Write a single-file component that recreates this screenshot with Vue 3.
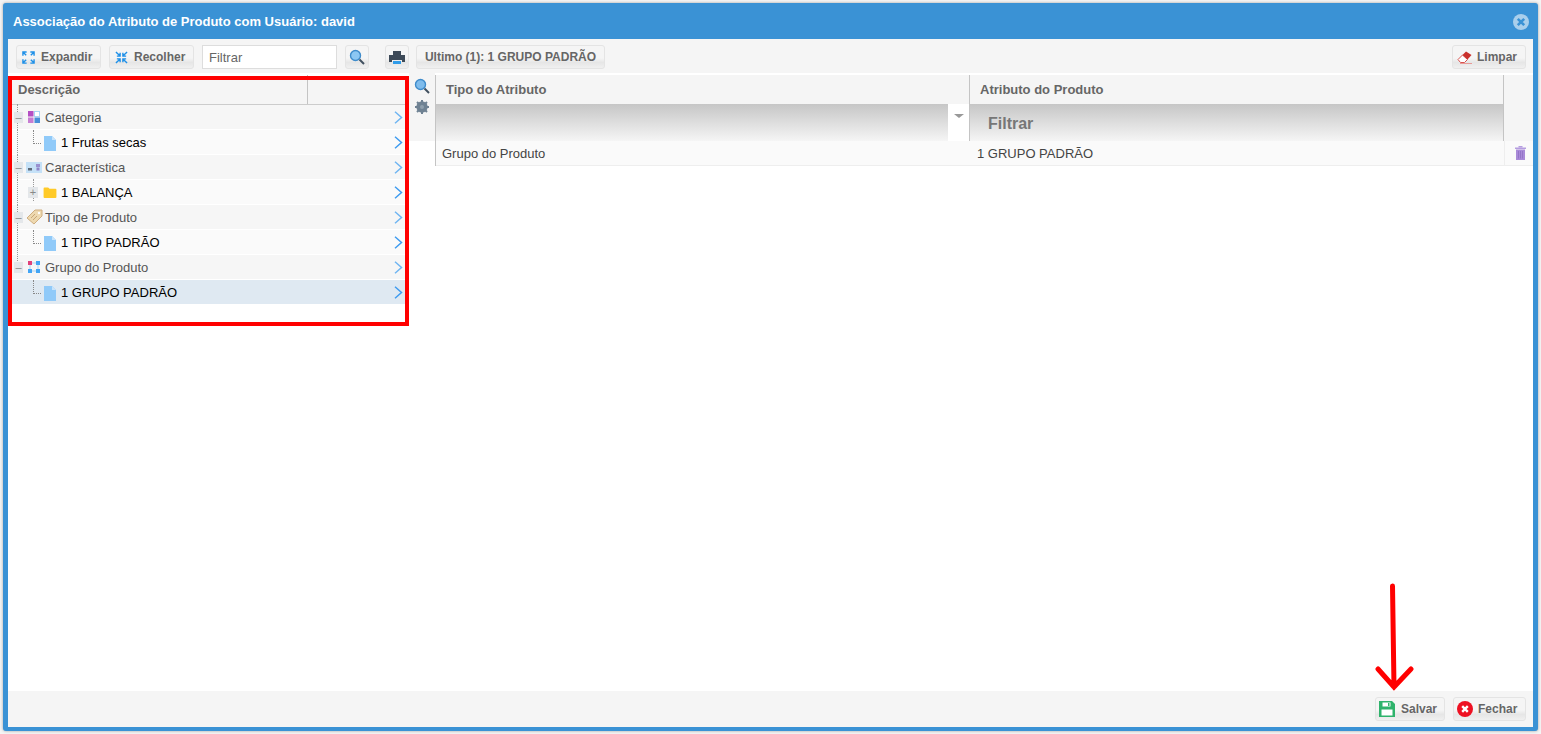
<script setup>
const rows = [
  { label: 'Categoria', root: true, icon: 'cat' },
  { label: '1 Frutas secas', icon: 'file' },
  { label: 'Característica', root: true, icon: 'car' },
  { label: '1 BALANÇA', icon: 'folder' },
  { label: 'Tipo de Produto', root: true, icon: 'tag' },
  { label: '1 TIPO PADRÃO', icon: 'file' },
  { label: 'Grupo do Produto', root: true, icon: 'group', last: true },
  { label: '1 GRUPO PADRÃO', icon: 'file', selected: true, last: true }
]
</script>

<template>
  <div class="page">
    <div class="window">
      <div class="title">
        <span>Associação do Atributo de Produto com Usuário: david</span>
        <svg class="close" width="16" height="16" viewBox="0 0 16 16">
          <circle cx="8" cy="8" r="8" fill="#a9cfec" />
          <path d="M4.800 4.800l6.400 6.400M11.200 4.800l-6.400 6.400" stroke="#3a92d5" stroke-width="2.600" />
        </svg>
      </div>

      <div class="toolbar">
        <button class="btn w85">
          <svg width="13" height="13" viewBox="0 0 14 14" fill="none" stroke="#1e90e8" stroke-width="1.500">
            <path d="M1 5V1h4M9 1h4v4M13 9v4H9M5 13H1V9M1.500 1.500l3 3M12.500 1.500l-3 3M12.500 12.500l-3-3M1.500 12.500l3-3" />
          </svg>
          Expandir
        </button>
        <button class="btn w85">
          <svg width="13" height="13" viewBox="0 0 14 14" fill="none" stroke="#1e90e8" stroke-width="1.500">
            <path d="M1 1l4.500 4.500M5.500 2v3.500H2M13 1L8.500 5.500M12 5.500H8.500V2M13 13L8.500 8.500M8.500 12V8.500H12M1 13l4.500-4.500M2 8.500h3.500V12" />
          </svg>
          Recolher
        </button>
        <input class="filter" placeholder="Filtrar" />
        <button class="btn square">
          <svg width="16" height="16" viewBox="0 0 16 16">
            <circle cx="6.500" cy="6.500" r="5" fill="#8cc7f3" stroke="#3f8ccb" stroke-width="1.400" />
            <path d="M10.500 10.500L15 15" stroke="#40505f" stroke-width="2" />
          </svg>
        </button>
        <button class="btn square print">
          <svg width="16" height="15" viewBox="0 0 16 15">
            <path d="M4 1h8v4H4z" fill="#3d4a58" />
            <path d="M0 5h16v7h-3v-2H3v2H0z" fill="#3d4a58" />
            <path d="M4 11h8v3H4z" fill="#2f9be8" />
          </svg>
        </button>
        <button class="btn last">Ultimo (1): 1 GRUPO PADRÃO</button>
        <button class="btn clear">
          <svg width="16" height="15" viewBox="0 0 16 14">
            <path d="M1 9l4.500-4.500 5 4.500L7.500 12H3.500z" fill="#fff" stroke="#d9534f" />
            <path d="M5.500 4.500L9 1l5.500 3.500-4 4.500z" fill="#c9302c" />
            <path d="M3 13h12" stroke="#e89b98" />
          </svg>
          Limpar
        </button>
      </div>

      <div class="body">
        <div class="tree">
          <div class="tree-head">
            <div class="tree-col">Descrição</div>
            <div class="tree-col-empty"></div>
          </div>
          <div
            v-for="row in rows"
            :key="row.label"
            class="row"
            :class="{ root: row.root, selected: row.selected, 'no-line': row.last }"
          >
            <span v-if="row.root" class="toggle">–</span>
            <span v-if="!row.root && row.icon !== 'folder'" class="elbow"></span>
            <span v-if="row.icon === 'folder'" class="toggle plus">+</span>

            <svg v-if="row.icon === 'cat'" class="ico" width="12" height="12" viewBox="0 0 12 12">
              <rect width="5.500" height="5.500" fill="#b44fc4" />
              <rect x="6.500" y="0.500" width="5" height="5" fill="#fff" stroke="#a9d4f5" />
              <rect y="6.500" width="5.500" height="5.500" fill="#c77dd3" />
              <rect x="6.500" y="6.500" width="5.500" height="5.500" fill="#4a8fd8" />
            </svg>
            <svg v-else-if="row.icon === 'car'" class="ico wide" width="16" height="11" viewBox="0 0 16 11">
              <rect width="16" height="11" fill="#c5e1f7" />
              <rect x="2" y="6" width="4" height="2.500" fill="#5f6b78" />
              <rect x="10" y="2" width="4" height="3" fill="#9a90d0" />
              <rect x="10.500" y="5.500" width="3" height="3" fill="#8f86c9" />
            </svg>
            <svg v-else-if="row.icon === 'tag'" class="ico wide" width="17" height="16" viewBox="0 0 17 16">
              <path d="M1 9l8-8h7v6l-8 8z" fill="#eed9b0" stroke="#cfae80" />
              <circle cx="13" cy="4" r="1.200" fill="#fff" />
              <path d="M5 9l4-4M7 11l4-4" stroke="#c9a777" />
            </svg>
            <svg v-else-if="row.icon === 'group'" class="ico" width="12" height="12" viewBox="0 0 12 12">
              <path d="M2 2h8v8H2z" fill="none" stroke="#a9d4f5" />
              <rect width="4" height="4" fill="#e0417a" />
              <rect x="8" width="4" height="4" fill="#42a5f5" />
              <rect y="8" width="4" height="4" fill="#42a5f5" />
              <rect x="8" y="8" width="4" height="4" fill="#42a5f5" />
            </svg>
            <svg v-else-if="row.icon === 'folder'" class="ico leaf folder" width="14" height="11" viewBox="0 0 14 12">
              <path d="M0 1.500A1 1 0 0 1 1 .500h4l1.500 1.500H13a1 1 0 0 1 1 1V11a1 1 0 0 1-1 1H1a1 1 0 0 1-1-1z" fill="#ffca28" />
            </svg>
            <svg v-else class="ico leaf" width="12" height="15" viewBox="0 0 12 15">
              <path d="M0 0h8l4 4v11H0z" fill="#90caf9" />
              <path d="M8 0l4 4H8z" fill="#c8e4fb" />
            </svg>

            <span class="label">{{ row.label }}</span>
            <svg class="chev" width="9" height="13" viewBox="0 0 9 13" fill="none" stroke-width="1.500">
              <path d="M1 .800l6.500 5.700L1 12.200" />
            </svg>
          </div>
        </div>

        <div class="tools">
          <svg width="16" height="16" viewBox="0 0 16 16">
            <circle cx="6.500" cy="6.500" r="5" fill="#7fbcec" stroke="#3f8ccb" stroke-width="1.400" />
            <path d="M10.500 10.500L15 15" stroke="#40505f" stroke-width="2" />
          </svg>
          <svg width="14" height="14" viewBox="0 0 14 14">
            <path d="M7 3a4 4 0 1 0 0 8 4 4 0 0 0 0-8z" fill="none" stroke="#6f8293" stroke-width="3.400" />
            <path d="M7 0v14M0 7h14M2 2l10 10M12 2L2 12" stroke="#6f8293" stroke-width="2" />
            <circle cx="7" cy="7" r="2" fill="#8fa0ae" />
          </svg>
        </div>

        <div class="grid">
          <div class="grid-head">
            <div class="cell first">Tipo do Atributo</div>
            <div class="cell second">Atributo do Produto</div>
            <div class="cell third"></div>
          </div>
          <div class="grid-filter">
            <div class="f-cell first">
              <div class="f-fill"></div>
              <div class="f-drop"><span class="caret"></span></div>
            </div>
            <div class="f-cell second"><span class="f-text">Filtrar</span></div>
            <div class="f-cell third"></div>
          </div>
          <div class="grid-row">
            <div class="d-cell first">Grupo do Produto</div>
            <div class="d-cell second">1 GRUPO PADRÃO</div>
            <div class="d-cell third">
              <svg width="11" height="14" viewBox="0 0 11 14">
                <path d="M0 1.500h11V3H0z" fill="#b59de0" />
                <path d="M3.500 0h4v1.500h-4z" fill="#b59de0" />
                <path d="M1 3.500h9V14H1z" fill="#a98ad8" />
                <path d="M3.500 5v7.500M5.500 5v7.500M7.500 5v7.500" stroke="#8f70c4" stroke-width=".8" />
              </svg>
            </div>
          </div>
        </div>
      </div>

      <div class="footer">
        <button class="btn save">
          <svg width="16" height="16" viewBox="0 0 16 16">
            <path d="M0 0h13l3 3v13H0z" fill="#2fb36c" />
            <path d="M3.500 1.500h8v4h-8z" fill="#fff" />
            <path d="M9 2h1.500v3H9z" fill="#2fb36c" />
            <path d="M2.500 8.500h11V14.500h-11z" fill="#fff" />
          </svg>
          Salvar
        </button>
        <button class="btn close-btn">
          <svg width="16" height="16" viewBox="0 0 16 16">
            <circle cx="8" cy="8" r="8" fill="#ee1122" />
            <path d="M5.200 5.200l5.600 5.600M10.800 5.200l-5.600 5.600" stroke="#fff" stroke-width="2.400" />
          </svg>
          Fechar
        </button>
      </div>
    </div>

    <svg class="arrow" width="40" height="110" viewBox="0 0 40 110" fill="none" stroke="#f00" stroke-width="5" stroke-linecap="round">
      <path d="M18.500 4l1.500 101M4 87l16 18 17-18" />
    </svg>
  </div>
</template>

<style>
html, body {
  margin: 0;
  background: #f4f4f4;
}
</style>

<style scoped>
.page {
  position: relative;
  box-sizing: border-box;
  width: 1541px;
  height: 734px;
  padding: 3px;
  font-family: "Liberation Sans", Arial, sans-serif;
  font-size: 13px;
  overflow: hidden;
}

.window {
  box-sizing: border-box;
  height: 728px;
  display: flex;
  flex-direction: column;
  background: #3a92d5;
  border-radius: 3px;
  padding: 0 5px 4px;
  box-shadow: 0 0 3px rgba(0, 0, 0, 0.35);
}

.title {
  height: 36px;
  flex: none;
  display: flex;
  align-items: center;
  justify-content: space-between;
  padding: 0 4px 0 5px;
  color: #fff;
  font-weight: bold;
  font-size: 13px;
}

.close {
  margin-top: 1px;
}

.toolbar {
  height: 34px;
  flex: none;
  display: flex;
  align-items: center;
  box-sizing: border-box;
  padding: 2px 7px 0 8px;
  background: #f5f5f5;
}

.btn {
  box-sizing: border-box;
  height: 24px;
  display: flex;
  align-items: center;
  justify-content: center;
  gap: 5px;
  padding: 0;
  border: 1px solid #e4e4e4;
  border-radius: 3px;
  background: linear-gradient(#f5f5f5 0, #f5f5f5 55%, #e6e6e6 75%, #f0f0f0 100%);
  color: #666;
  font-family: inherit;
  font-size: 12px;
  font-weight: bold;
  white-space: nowrap;
}

.w85 {
  width: 85px;
  margin-right: 8px;
  justify-content: flex-start;
  padding-left: 5px;
  gap: 6px;
}

.filter {
  box-sizing: border-box;
  width: 135px;
  height: 24px;
  margin-right: 8px;
  padding: 0 6px;
  border: 1px solid #ddd;
  background: #fff;
  font-family: inherit;
  font-size: 13px;
}

.filter::placeholder {
  color: #666;
  opacity: 1;
}

.square {
  width: 24px;
}

.print {
  margin-left: 16px;
  margin-right: 7px;
}

.last {
  width: 189px;
}

.clear {
  width: 74px;
  margin-left: auto;
  justify-content: flex-start;
  padding-left: 4px;
  gap: 4px;
}

.body {
  flex: 1;
  display: flex;
  align-items: flex-start;
  background: #fff;
  min-height: 0;
  position: relative;
}

.tree {
  position: relative;
  box-sizing: border-box;
  width: 401px;
  height: 250px;
  margin-top: 3px;
  flex: none;
  border: 4px solid #f00;
  background: #fff;
}

.tree::before {
  content: "";
  position: absolute;
  left: 295px;
  top: -5px;
  height: 1px;
  border-left: 1px solid #c4c4c4;
}

.tree-head {
  box-sizing: border-box;
  height: 25px;
  display: flex;
  background: #f5f5f5;
  border-bottom: 1px solid #ccc;
  color: #666;
  font-weight: bold;
  font-size: 13px;
}

.tree-col {
  width: 296px;
  padding-left: 6px;
  line-height: 19px;
  border-right: 1px solid #c4c4c4;
  box-sizing: border-box;
}

.row {
  position: relative;
  height: 24px;
  margin-bottom: 1px;
  display: flex;
  align-items: center;
  background: #fafafa;
  color: #000;
  font-size: 13px;
}

.row.root {
  background: #f6f6f6;
  color: #555;
}

.row.selected {
  background: #dfe9f2;
}

.row::before {
  content: "";
  position: absolute;
  left: 5px;
  top: -1px;
  bottom: -1px;
  border-left: 1px dotted #999;
}

.row.selected::before,
.row.no-line:not(.root)::before {
  display: none;
}

.row.root.no-line::before {
  bottom: 12px;
}

.toggle {
  position: absolute;
  left: 2px;
  top: 7px;
  width: 9px;
  height: 11px;
  z-index: 1;
  background: #e4e7ea;
  color: #888;
  font-size: 11px;
  line-height: 10px;
  text-align: center;
}

.toggle.plus {
  left: 16px;
  top: 7px;
  width: 10px;
}

.row:has(.plus)::after {
  content: "";
  position: absolute;
  left: 21px;
  top: -1px;
  bottom: 3px;
  border-left: 1px dotted #999;
}

.elbow {
  position: absolute;
  left: 21px;
  top: 0;
  width: 7px;
  height: 13px;
  border-left: 1px dotted #888;
  border-bottom: 1px dotted #888;
}

.ico {
  margin-left: 16px;
  flex: none;
}

.ico.wide {
  margin-left: 14px;
}

.ico.leaf {
  margin-left: 32px;
  margin-top: 2px;
}

.ico.leaf.folder {
  margin-left: 31px;
  margin-top: 1px;
}

.ico + .label {
  position: absolute;
  left: 33px;
}

.ico.leaf + .label {
  left: 49px;
}

.chev {
  position: absolute;
  right: 2px;
  top: 6px;
  stroke: #3f9cf0;
}

.root .chev {
  stroke: #6fb5f2;
}

.tools {
  width: 26px;
  height: 68px;
  flex: none;
  display: flex;
  flex-direction: column;
  align-items: center;
  gap: 6px;
  padding-top: 5px;
  box-sizing: border-box;
  background: #f5f5f5;
}

.grid {
  flex: 1;
  min-width: 0;
  border-left: 1px solid #c4c4c4;
  margin-top: 2px;
  background: #fff;
}

.grid-head {
  display: flex;
  height: 29px;
  background: #f5f5f5;
  color: #666;
  font-weight: bold;
  font-size: 13px;
}

.first {
  width: 534px;
  flex: none;
}

.second {
  width: 534px;
  flex: none;
}

.third {
  flex: 1;
}

.cell {
  box-sizing: border-box;
  padding-left: 10px;
  line-height: 29px;
  border-right: 1px solid #c4c4c4;
}

.cell.third {
  border-right: 0;
}

.grid-filter {
  display: flex;
  height: 37px;
  background: linear-gradient(#c6c6c6, #f5f5f5);
}

.f-cell {
  box-sizing: border-box;
  border-right: 1px solid #c4c4c4;
  display: flex;
}

.f-cell.third {
  border-right: 0;
  background: #f5f5f5;
}

.f-fill {
  flex: 1;
}

.f-drop {
  width: 21px;
  background: #fff;
  display: flex;
  justify-content: center;
  padding-top: 10px;
  box-sizing: border-box;
}

.caret {
  width: 0;
  height: 0;
  border-left: 5px solid transparent;
  border-right: 5px solid transparent;
  border-top: 4px solid #999;
}

.f-text {
  padding-left: 18px;
  color: #777;
  font-size: 16px;
  font-weight: bold;
  line-height: 39px;
}

.grid-row {
  display: flex;
  height: 25px;
  box-sizing: border-box;
  background: #fafafa;
  border-bottom: 1px solid #eee;
  color: #444;
  font-size: 13px;
}

.d-cell {
  box-sizing: border-box;
  padding-left: 6px;
  line-height: 26px;
}

.d-cell.second {
  padding-left: 7px;
}

.d-cell.third {
  display: flex;
  align-items: center;
  padding-left: 10px;
  border-left: 1px solid #eee;
}

.footer {
  height: 36px;
  flex: none;
  display: flex;
  align-items: center;
  justify-content: flex-end;
  gap: 8px;
  padding-right: 7px;
  background: #f5f5f5;
}

.save {
  width: 70px;
  justify-content: flex-start;
  padding-left: 3px;
  gap: 6px;
}

.close-btn {
  width: 73px;
  justify-content: flex-start;
  padding-left: 3px;
  gap: 5px;
}

.arrow {
  position: absolute;
  left: 1374px;
  top: 582px;
}
</style>
